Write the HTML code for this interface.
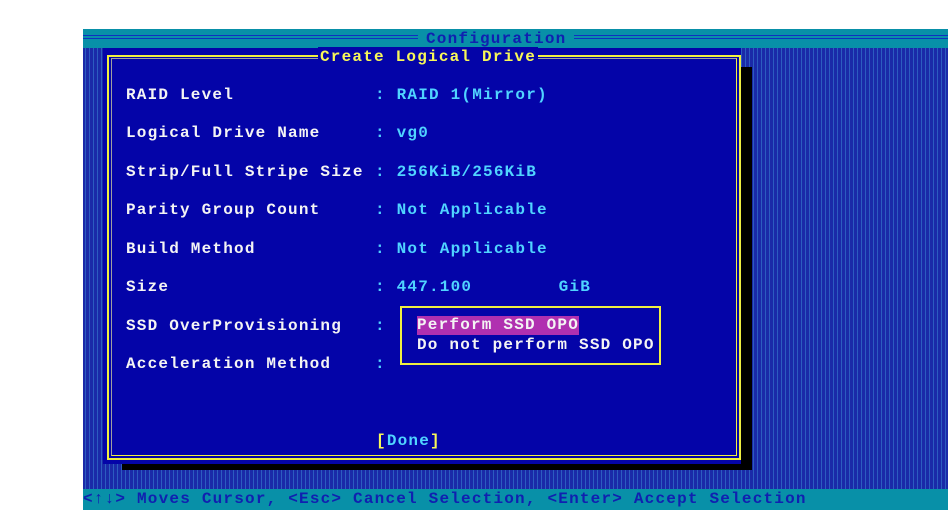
<!DOCTYPE html>
<html><head><style>
body{margin:0;width:948px;height:510px;background:#fff;position:relative;overflow:hidden;font-family:"Liberation Mono",monospace;font-weight:bold;font-size:16px;letter-spacing:1.2px}
div{position:absolute;white-space:pre}
.bg{left:83px;top:48px;width:865px;height:441px;background:repeating-linear-gradient(90deg,#1a2aa8 0 2px,#2c5cc0 2px 3px,#1a2aa8 3px 4px)}
.top{left:83px;top:29px;width:865px;height:19px;background:#0890a8}
.line{left:83px;width:865px;height:1px;background:#1030c0}
.bot{left:83px;top:489px;width:865px;height:21px;background:#0890a8;color:#1020b0;line-height:21px}
.dlg{left:103px;top:48px;width:638px;height:416px;background:#0404a8}
.sh{left:741px;top:67px;width:11px;height:403px;background:#000}
.sh2{left:122px;top:464px;width:630px;height:6px;background:#000}
.b{border:2px solid #f0f040}
.t{line-height:20px}
.w{color:#f4f4f4}.c{color:#50d4ff}.y{color:#f8f858}
</style></head><body>
<div class="top"></div>
<div class="line" style="top:35px"></div><div class="line" style="top:38px"></div>
<div class="t" style="left:418px;top:29px;background:#0890a8;color:#1020b0;padding:0 8px">Configuration</div>
<div class="bg"></div>
<div class="sh"></div><div class="sh2"></div>
<div class="dlg"></div>
<div class="b" style="left:107px;top:55px;width:630px;height:401px"></div>
<div style="left:111px;top:58px;width:624px;height:396px;border:1px solid #f0f040;border-top-color:#a0a0a0;border-left-color:#a0a0a0"></div>
<div class="t y" style="left:318px;top:47px;background:#0404a8;padding:0 2px">Create Logical Drive</div>
<div class="t w" style="left:126px;top:85px">RAID Level</div><div class="t c" style="left:375px;top:85px">: RAID 1(Mirror)</div>
<div class="t w" style="left:126px;top:123px">Logical Drive Name</div><div class="t c" style="left:375px;top:123px">: vg0</div>
<div class="t w" style="left:126px;top:162px">Strip/Full Stripe Size</div><div class="t c" style="left:375px;top:162px">: 256KiB/256KiB</div>
<div class="t w" style="left:126px;top:200px">Parity Group Count</div><div class="t c" style="left:375px;top:200px">: Not Applicable</div>
<div class="t w" style="left:126px;top:239px">Build Method</div><div class="t c" style="left:375px;top:239px">: Not Applicable</div>
<div class="t w" style="left:126px;top:277px">Size</div><div class="t c" style="left:375px;top:277px">: 447.100        GiB</div>
<div class="t w" style="left:126px;top:316px">SSD OverProvisioning</div><div class="t c" style="left:375px;top:316px">:</div>
<div class="t w" style="left:126px;top:354px">Acceleration Method</div><div class="t c" style="left:375px;top:354px">:</div>
<div class="b" style="left:400px;top:306px;width:257px;height:55px;background:#0404a8"></div>
<div class="t w" style="left:417px;top:316px;background:#b030b0;line-height:19px">Perform SSD OPO</div>
<div class="t w" style="left:417px;top:335px">Do not perform SSD OPO</div>
<div class="t" style="left:376px;top:431px"><span class="y">[</span><span class="c">Done</span><span class="y">]</span></div>
<div class="bot">&lt;↑↓&gt; Moves Cursor, &lt;Esc&gt; Cancel Selection, &lt;Enter&gt; Accept Selection</div>
</body></html>
